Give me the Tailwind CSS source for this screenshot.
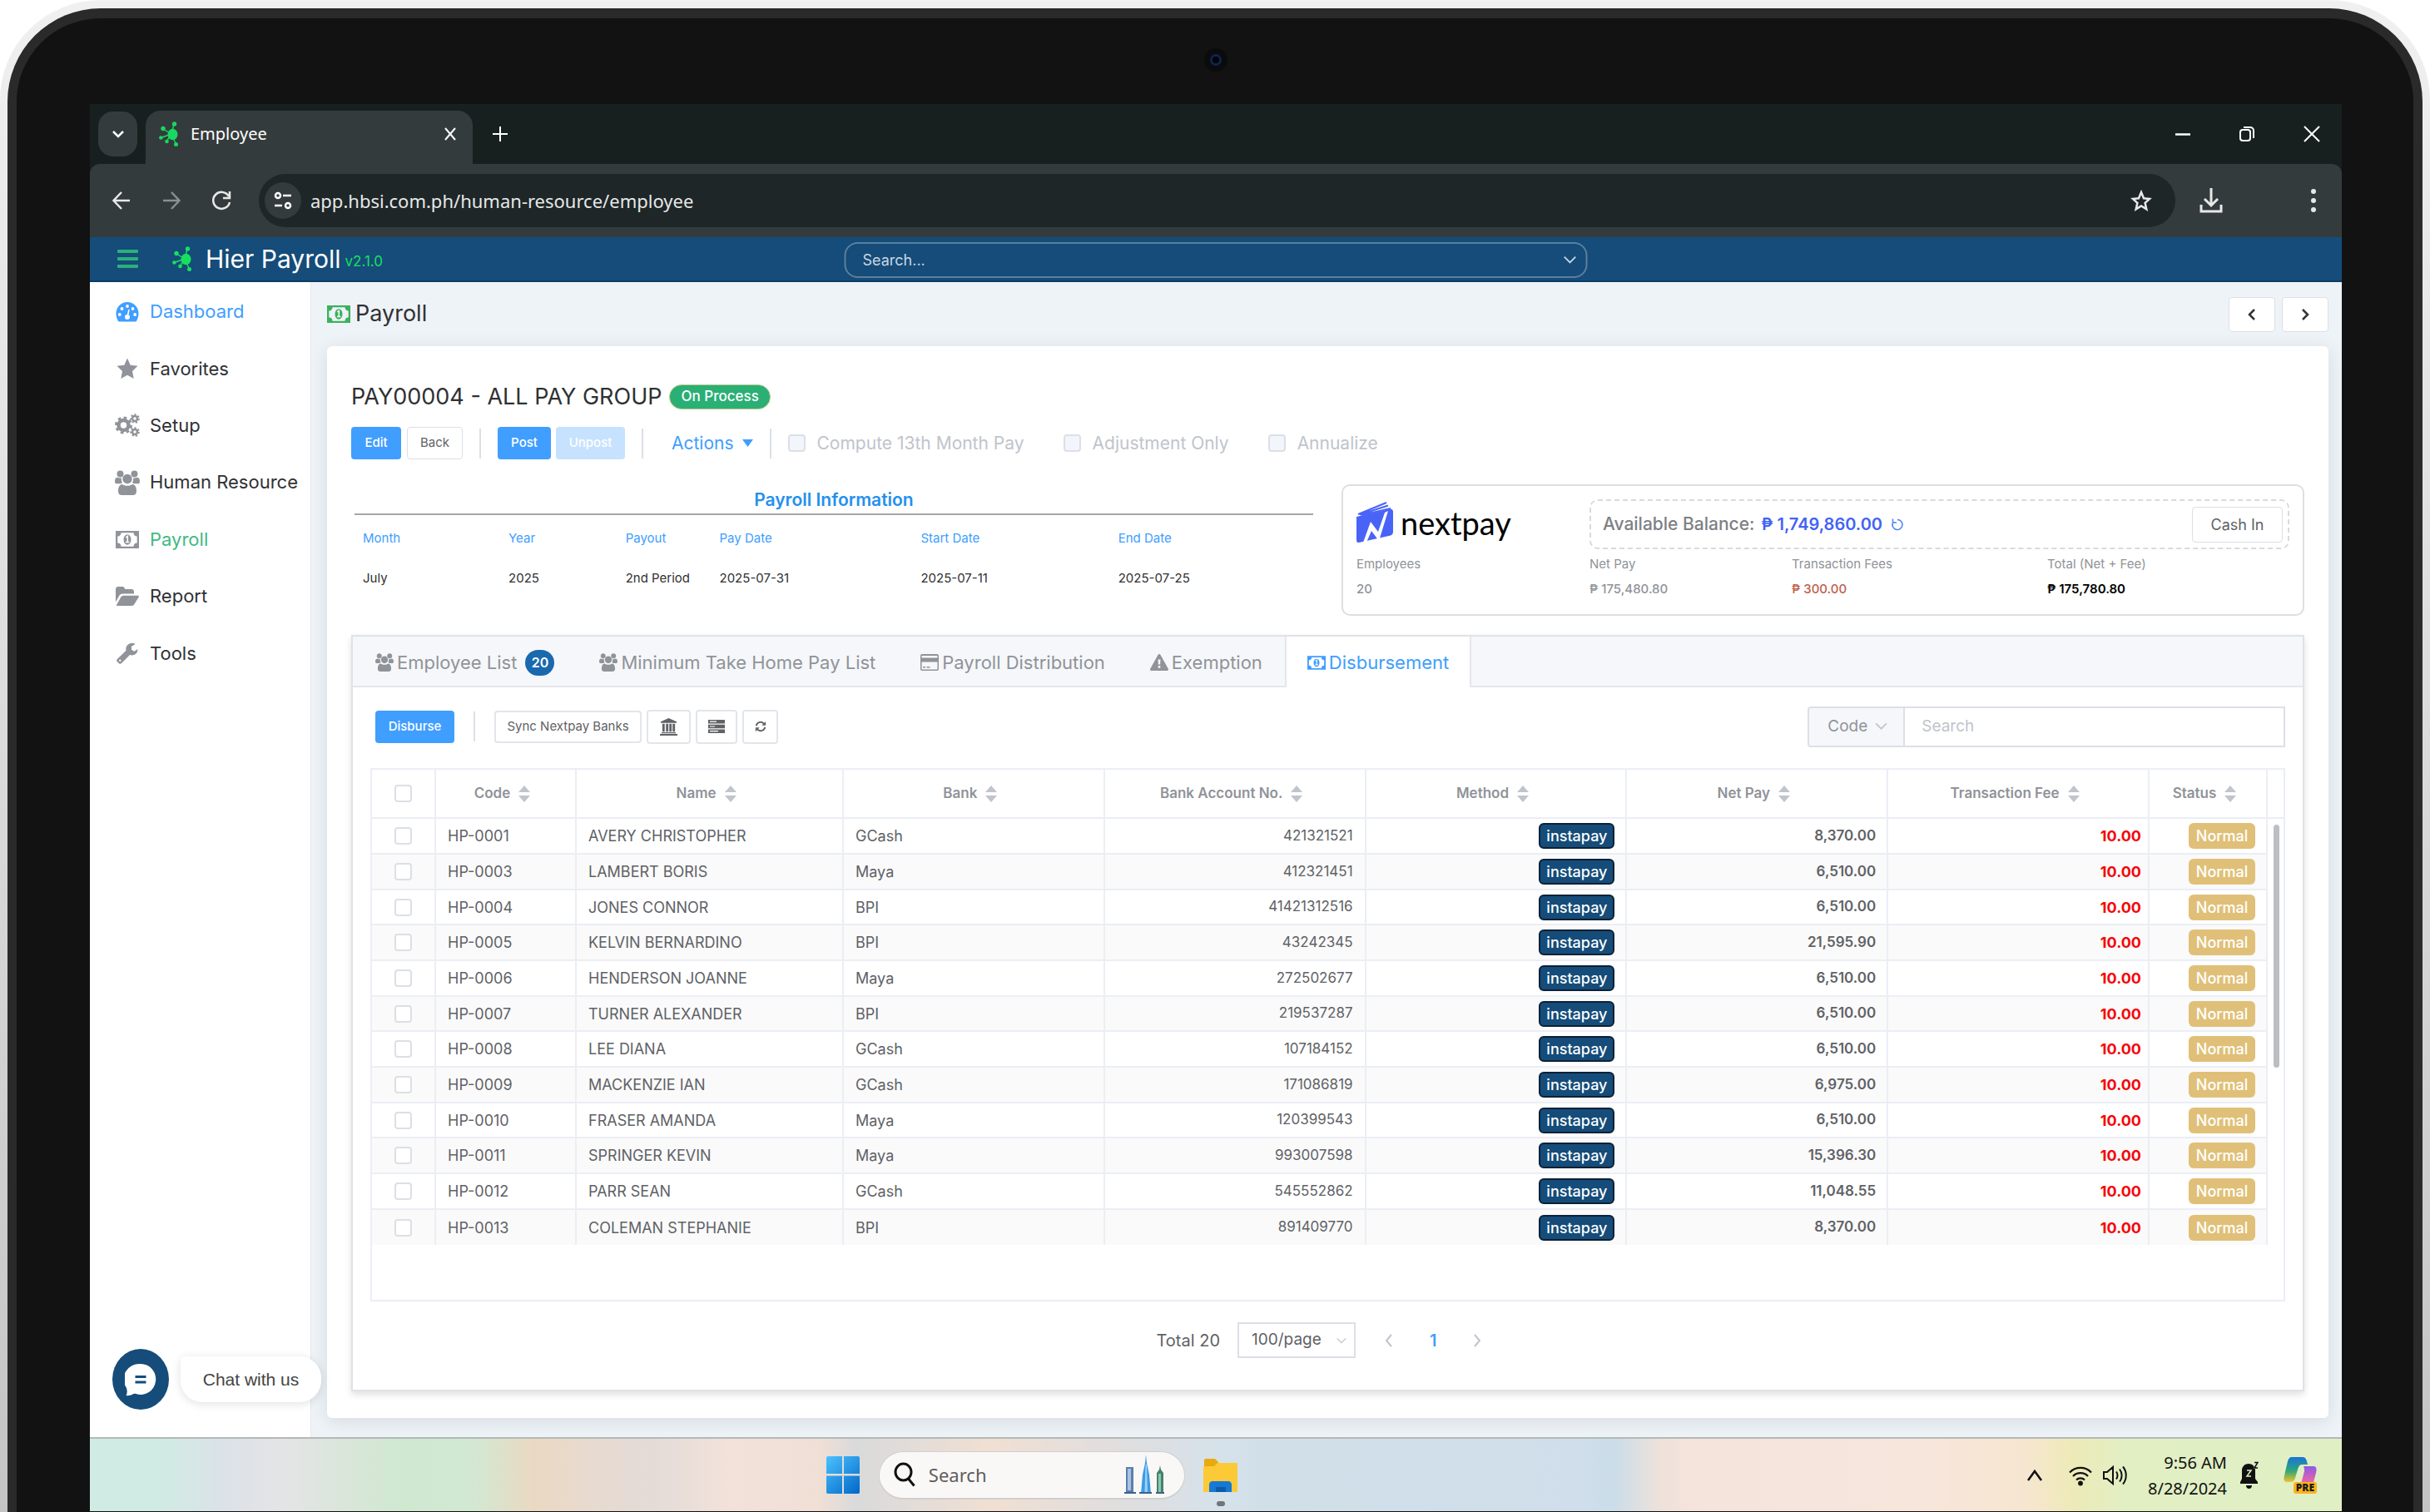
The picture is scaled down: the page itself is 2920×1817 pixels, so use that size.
<!DOCTYPE html>
<html lang="en">
<head>
    <meta charset="UTF-8">
    <meta name="viewport" content="width=device-width, initial-scale=1.0">
    <title>Employee - Hier Payroll</title>
    <script src="https://cdn.jsdelivr.net/npm/@tailwindcss/browser@4"></script>
</head>
<body class="min-h-screen bg-white font-['Inter','Liberation_Sans',sans-serif] text-[#606266]">
    <!-- Icon sprite -->
    <svg class="hidden" aria-hidden="true">
        <symbol id="i-virus" viewBox="0 0 24 30">
            <g stroke="currentColor" stroke-width="1.4"><path d="M15 15L18 3M15 15L5 9M15 15L2.500 19.500M15 15L9 24M15 15L20.500 27.500"/></g>
            <ellipse cx="16.500" cy="15.500" rx="6" ry="6.800" fill="currentColor"/>
            <g fill="currentColor"><circle cx="18.500" cy="3" r="2.700"/><circle cx="5" cy="8.500" r="2.700"/><circle cx="2.400" cy="19.500" r="2.300"/><circle cx="9.500" cy="24" r="2.300"/><circle cx="20.500" cy="27.500" r="2.500"/></g>
        </symbol>
        <symbol id="i-chevron" viewBox="0 0 16 16"><path d="M2 5l6 6 6-6" fill="none" stroke="currentColor" stroke-width="1.600"/></symbol>
        <symbol id="i-dash" viewBox="0 0 28 26">
            <path fill="currentColor" d="M14 1A13.500 13.500 0 0 0 .5 14.500c0 3.700 1 6.500 2.300 9 .4.700.8 1 1.600 1h19.200c.8 0 1.200-.3 1.600-1 1.300-2.500 2.300-5.300 2.300-9A13.500 13.500 0 0 0 14 1z"/>
            <g fill="#fff"><circle cx="4.800" cy="16" r="1.900"/><circle cx="7.500" cy="9" r="1.900"/><circle cx="14" cy="6" r="1.900"/><circle cx="20.500" cy="9" r="1.900"/><circle cx="23.200" cy="16" r="1.900"/><circle cx="14" cy="19" r="3"/></g>
            <path d="M14 19l2-9" stroke="#fff" stroke-width="1.600"/>
        </symbol>
        <symbol id="i-star" viewBox="0 0 26 26"><path fill="currentColor" d="M13 .5l3.700 8.300 8.800 1-6.500 6.200 1.700 9L13 20.700 5.300 25 7 16 .5 9.800l8.800-1z"/></symbol>
        <symbol id="i-cogs" viewBox="0 0 30 28">
            <g fill="none" stroke="currentColor">
                <circle cx="10.500" cy="14" r="6" stroke-width="4.500"/><circle cx="10.500" cy="14" r="9" stroke-width="3" stroke-dasharray="3.530 3.530"/>
                <circle cx="24" cy="6" r="3" stroke-width="2.500"/><circle cx="24" cy="6" r="4.800" stroke-width="2" stroke-dasharray="2.150 2.150"/>
                <circle cx="24" cy="22" r="3" stroke-width="2.500"/><circle cx="24" cy="22" r="4.800" stroke-width="2" stroke-dasharray="2.150 2.150"/>
            </g>
        </symbol>
        <symbol id="i-users" viewBox="0 0 30 30">
            <g fill="currentColor"><circle cx="6.500" cy="4.500" r="4"/><circle cx="23.500" cy="4.500" r="4"/><circle cx="15" cy="10.500" r="5.700"/>
            <path d="M3.500 8.800C1 8.800 0 10.500 0 13.500c0 2 1 2.800 2.500 2.800H7c.8-.7 1.500-1 2-1.200C7.800 13 7.500 11 8 9.200c-1.500.5-3 .4-4.500-.4zM26.500 8.800c2.500 0 3.500 1.700 3.500 4.700 0 2-1 2.800-2.500 2.800H23c-.8-.7-1.500-1-2-1.200 1.200-2.100 1.500-4.100 1-5.900 1.500.5 3 .4 4.500-.4z"/>
            <path d="M9 17c-3.500 0-5 4-5 8.500C4 28.500 5.800 30 8.500 30h13c2.700 0 4.500-1.500 4.500-4.500 0-4.500-1.500-8.500-5-8.500-1.600 1-3.500 1.800-6 1.800S10.600 18 9 17z"/></g>
        </symbol>
        <symbol id="i-money" viewBox="0 0 28 21">
            <path fill="currentColor" fill-rule="evenodd" d="M0 0h28v21H0zM6.500 2.300A4.300 4.300 0 0 1 2.300 6.500v8a4.300 4.300 0 0 1 4.200 4.200h15a4.300 4.300 0 0 1 4.200-4.200v-8a4.300 4.300 0 0 1-4.200-4.200z"/>
            <ellipse cx="14" cy="10.500" rx="4.500" ry="6.200" fill="currentColor"/><path d="M12.300 7.800L14.300 6.500V13M12 13.600h4.300" fill="none" stroke="#fff" stroke-width="1.500"/>
        </symbol>
        <symbol id="i-folder" viewBox="0 0 28 24"><path fill="currentColor" d="M0 18.500V3C0 1.300 1.300 0 3 0h5c1.700 0 3 1.300 3 3h8c1.700 0 3 1.300 3 3v2.500H8.500c-1.500 0-3 .8-4 2zM1 22l5.300-9.500c.6-1 1.700-1.800 3-1.800H27c1 0 1.300.8.700 1.700L22.500 21c-.7 1.200-1.800 2-3 2H1.500c-.6 0-.8-.4-.5-1z"/></symbol>
        <symbol id="i-wrench" viewBox="0 0 26 26"><path fill="currentColor" fill-rule="evenodd" d="M25.500 8.500c0 4-3.200 7-7 7-.9 0-1.700-.2-2.500-.5L6.300 24.800a2.700 2.700 0 0 1-3.900 0l-1.200-1.200a2.700 2.700 0 0 1 0-3.900L11.500 9.800A7.300 7.300 0 0 1 18.500.8c1.500 0 3 .4 4.200 1.100L18 4.800v4l3.200 2 4.200-2.600zM4.300 20.500a1.200 1.200 0 1 0 0 2.400 1.200 1.200 0 0 0 0-2.400z"/></symbol>
        <symbol id="i-card" viewBox="0 0 22 20"><path fill="currentColor" fill-rule="evenodd" d="M2 0h18a2 2 0 0 1 2 2v16a2 2 0 0 1-2 2H2a2 2 0 0 1-2-2V2a2 2 0 0 1 2-2zM1.500 2v2.500h19V2zM1.500 9.500V18l.5.500h18l.5-.5V9.500zM3 15h3v1.500H3zM7.500 15h4v1.500h-4z"/></symbol>
        <symbol id="i-warn" viewBox="0 0 22 20"><path fill="currentColor" fill-rule="evenodd" d="M11 0c.7 0 1.200.3 1.500.9l9.200 16.700c.7 1.200-.1 2.400-1.500 2.400H1.800C.4 20-.4 18.800.3 17.600L9.500.9C9.800.3 10.300 0 11 0zM9.500 6.500l.4 6h2.200l.4-6zM9.700 14v2.700h2.600V14z"/></symbol>
        <symbol id="i-bank" viewBox="0 0 22 22"><path fill="currentColor" d="M11 0l10 4.500V6H1V4.500zM3 7.200h3V17H3zM7.600 7.200h3V17h-3zM11.800 7.200h3V17h-3zM16 7.200h3V17h-3zM2 17.800h18v1.400H2zM0 20h22v2H0z"/></symbol>
        <symbol id="i-server" viewBox="0 0 20 16"><path fill="currentColor" d="M0 0h20v4.500H0zM0 5.700h20v4.500H0zM0 11.400h20V16H0z"/><path d="M2 2.200h8M2 8h6M2 13.700h10" stroke="#fff" stroke-width="1.200"/></symbol>
        <symbol id="i-refresh" viewBox="0 0 16 16"><path d="M2 7a6 6 0 0 1 10.800-2.500M14 9A6 6 0 0 1 3.200 11.500" fill="none" stroke="currentColor" stroke-width="2.200"/><path fill="currentColor" d="M15 1v5.500H9.500zM1 15V9.500h5.500z"/></symbol>
    </svg>

    <!-- Laptop bezel -->
    <div class="flex min-h-screen flex-col rounded-t-[120px] border-t border-[#f4f4f4] bg-linear-to-b from-[#f0f0f0] to-[#c4c4c4] px-[9px] pt-[9px]">
        <div class="flex flex-1 flex-col rounded-t-[112px] border-x-[11px] border-t-[12px] border-[#2a2a2a] bg-[#121212] pr-[86px] pb-px pl-[88px]">
            <div class="flex h-[103px] items-center justify-center pb-1">
                <div class="flex size-7 items-center justify-center rounded-full bg-[#0b0b0b]">
                    <div class="flex size-[14px] items-center justify-center rounded-full bg-[#0a2550]"><span class="size-2 rounded-full bg-black"></span></div>
                </div>
            </div>

            <div class="flex flex-1 flex-col bg-white">
                <!-- Browser tab strip -->
                <div class="flex h-[72px] items-center bg-[#18201f] pl-[10px] font-['Noto_Sans',sans-serif] text-white">
                    <button class="flex h-[54px] w-[47px] items-center justify-center rounded-[18px] bg-[#343b3c]" aria-label="Search tabs">
                        <svg class="size-4"><path d="M2 5l6 6 6-6" fill="none" stroke="#fff" stroke-width="2.500"/></svg>
                    </button>
                    <div class="ml-[10px] flex h-16 w-[393px] items-center self-end rounded-t-[18px] bg-[#343b3c] pr-[18px] pb-2 pl-4">
                        <svg class="h-[30px] w-6 text-[#17d860]"><use href="#i-virus"/></svg>
                        <span class="ml-[14px] flex-1 text-[20px]">Employee</span>
                        <button aria-label="Close tab"><svg class="size-[18px]" viewBox="0 0 18 18"><path d="M3 2l12 14M15 2L3 16" stroke="#fff" stroke-width="2"/></svg></button>
                    </div>
                    <button class="ml-6" aria-label="New tab"><svg class="size-[18px]"><path d="M9 0v18M0 9h18" stroke="#fff" stroke-width="2"/></svg></button>
                    <div class="ml-auto flex items-center gap-[58px] pr-[26px]">
                        <button aria-label="Minimize"><svg class="h-[3px] w-[18px]"><path d="M0 1.500h18" stroke="#fff" stroke-width="2.500"/></svg></button>
                        <button aria-label="Restore"><svg class="size-5" viewBox="0 0 20 20" fill="none" stroke="#fff" stroke-width="2"><rect x="2" y="5" width="12" height="13" rx="3"/><path d="M6 2h8a4 4 0 0 1 4 4v9"/></svg></button>
                        <button aria-label="Close"><svg class="size-5" viewBox="0 0 20 20"><path d="M1 1l18 18M19 1L1 19" stroke="#fff" stroke-width="2"/></svg></button>
                    </div>
                </div>
                <!-- Address bar -->
                <div class="bg-[#18201f]">
                    <div class="flex h-[88px] items-center rounded-t-[12px] bg-[#343b3c] pr-[31px] pl-[26px] font-['Noto_Sans',sans-serif]">
                        <button aria-label="Back"><svg class="size-6" viewBox="0 0 24 24" fill="none" stroke="#e8e8e8" stroke-width="2.500"><path d="M22 12H3M12 2L2.500 12l9.500 10"/></svg></button>
                        <button class="ml-9" aria-label="Forward"><svg class="size-6" viewBox="0 0 24 24" fill="none" stroke="#8a8f8f" stroke-width="2.500"><path d="M2 12h19M12 2l9.500 10-9.500 10"/></svg></button>
                        <button class="ml-9" aria-label="Reload"><svg class="size-6" viewBox="0 0 24 24" fill="none" stroke="#e8e8e8" stroke-width="2.500"><path d="M21 7A10 10 0 1 0 22 14M22 1v8h-8"/></svg></button>
                        <div class="ml-[33px] flex h-16 flex-1 items-center rounded-full bg-[#1e2627] pr-[28px] pl-[7px]">
                            <div class="flex size-[44px] items-center justify-center rounded-full bg-[#343b3c]">
                                <svg class="size-6" viewBox="0 0 24 24" fill="none" stroke="#fff" stroke-width="2.500"><circle cx="6" cy="6" r="3"/><path d="M12 6h10M2 18h9"/><circle cx="18" cy="18" r="3"/></svg>
                            </div>
                            <input class="ml-[11px] flex-1 text-[22px] text-[#e6e8e8]" aria-label="Address" value="app.hbsi.com.ph/human-resource/employee">
                            <button aria-label="Bookmark"><svg class="size-[26px]" viewBox="0 0 26 26"><path d="M13 3l3 7.300 7 .6-5.400 5 1.700 7.500-6.300-4-6.300 4 1.700-7.500-5.400-5 7-.6z" fill="none" stroke="#e8e8e8" stroke-width="2.500"/></svg></button>
                        </div>
                        <button class="ml-[29px]" aria-label="Downloads"><svg class="h-[30px] w-7" viewBox="0 0 28 30" fill="none" stroke="#e8e8e8" stroke-width="3"><path d="M14 0v20M6 13l8 8 8-8M2 20v8h24v-8"/></svg></button>
                        <button class="ml-[106px]" aria-label="Menu"><svg class="h-7 w-1.5" fill="#e8e8e8"><circle cx="3" cy="3" r="3"/><circle cx="3" cy="14" r="3"/><circle cx="3" cy="25" r="3"/></svg></button>
                    </div>
                </div>

                <!-- App header -->
                <header class="relative flex h-[54px] items-center border-b-2 border-[#0c3b66] bg-[#154c79] pl-[33px]">
                    <button aria-label="Toggle menu"><svg class="h-[22px] w-[25px]" fill="#2bb07b"><rect width="25" height="4" rx="1"/><rect y="9" width="25" height="4" rx="1"/><rect y="18" width="25" height="4" rx="1"/></svg></button>
                    <a href="#" class="ml-[41px] flex items-center">
                        <svg class="h-[30px] w-6 text-[#17e05f]"><use href="#i-virus"/></svg>
                        <span class="ml-4 text-[30px] text-white">Hier Payroll</span>
                        <span class="ml-[5px] pt-2 text-[17px] text-[#17e05f]">v2.1.0</span>
                    </a>
                    <div class="absolute top-[6px] left-1/2 h-[43px] w-[33%] -translate-x-1/2">
                        <input class="size-full rounded-2xl border-2 border-[#5b7f9e] px-5 text-[18px] placeholder:text-[#c9d6e2]" aria-label="Search" placeholder="Search...">
                        <svg class="absolute top-3 right-3 size-[18px] text-[#c9d6e2]"><use href="#i-chevron"/></svg>
                    </div>
                </header>

                <div class="flex flex-1">
                    <!-- Sidebar -->
                    <aside class="relative z-10 flex w-[266px] flex-col border-r border-[#e4e9ee] bg-white">
                        <nav class="flex flex-col pt-px text-[22px] text-[#303133]">
                            <a href="#" class="flex h-[69px] items-center gap-3 pl-[30px] text-[#409eff]"><svg class="h-[26px] w-[30px]"><use href="#i-dash"/></svg>Dashboard</a>
                            <a href="#" class="flex h-[68px] items-center gap-3 pl-[30px]"><svg class="h-[26px] w-[30px] text-[#909399]"><use href="#i-star"/></svg>Favorites</a>
                            <a href="#" class="flex h-[68px] items-center gap-3 pl-[30px]"><svg class="h-[28px] w-[30px] text-[#909399]"><use href="#i-cogs"/></svg>Setup</a>
                            <a href="#" class="flex h-[69px] items-center gap-3 pl-[30px]"><svg class="h-[30px] w-[30px] text-[#909399]"><use href="#i-users"/></svg>Human Resource</a>
                            <a href="#" class="flex h-[68px] items-center gap-3 pl-[30px] text-[#42b983]"><svg class="h-[21px] w-[30px] text-[#909399]"><use href="#i-money"/></svg>Payroll</a>
                            <a href="#" class="flex h-[69px] items-center gap-3 pl-[30px]"><svg class="h-[24px] w-[30px] text-[#909399]"><use href="#i-folder"/></svg>Report</a>
                            <a href="#" class="flex h-[68px] items-center gap-3 pl-[30px]"><svg class="h-[26px] w-[30px] text-[#909399]"><use href="#i-wrench"/></svg>Tools</a>
                        </nav>
                        <div class="mt-auto mb-[33px] ml-[27px] flex items-center gap-[14px]">
                            <button class="flex h-[73px] w-[68px] shrink-0 items-center justify-center rounded-[50%] bg-[#154c79]" aria-label="Open chat">
                                <svg class="h-10 w-[38px]" viewBox="0 0 38 40"><path fill="#fff" d="M19 1a18 18.500 0 1 1-5 36.200c-1.500-.5-3-.6-4.500.3C7 38.800 4 39.500 1.500 39c1.500-2.500 1.500-5.500.5-9A18.500 18.500 0 0 1 19 1z"/><path d="M12.500 16.500h13M12.500 23h13" stroke="#154c79" stroke-width="2.800"/></svg>
                            </button>
                            <div class="flex h-[55px] w-[169px] shrink-0 items-center justify-center rounded-[26px] rounded-tl-md bg-white font-['Liberation_Sans',sans-serif] text-[21px] text-[#444] shadow-[0_2px_12px_rgba(0,0,0,0.12)]">Chat with us</div>
                        </div>
                    </aside>

                    <!-- Page -->
                    <main class="flex flex-1 flex-col bg-[#eef3f8] pr-[16px] pb-[23px] pl-[19px]">
                        <div class="flex h-[77px] items-center">
                            <svg class="h-[21px] w-7 text-[#3cb15c]"><use href="#i-money"/></svg>
                            <h1 class="ml-[6px] flex-1 text-[27px] text-[#303133]">Payroll</h1>
                            <div class="flex gap-2">
                                <button class="flex h-[42px] w-[56px] items-center justify-center rounded border border-[#dcdfe6] bg-white" aria-label="Previous"><svg class="size-4" fill="none" stroke="#333" stroke-width="2.500"><path d="M11 2L5 8l6 6"/></svg></button>
                                <button class="flex h-[42px] w-[56px] items-center justify-center rounded border border-[#dcdfe6] bg-white" aria-label="Next"><svg class="size-4" fill="none" stroke="#333" stroke-width="2.500"><path d="M5 2l6 6-6 6"/></svg></button>
                            </div>
                        </div>

                        <section class="flex flex-1 flex-col rounded-md bg-white px-[29px] pt-[42px] pb-8 shadow-[0_4px_22px_rgba(0,0,0,0.10)]">
                            <div class="flex h-[38px] items-center gap-[9px]">
                                <h2 class="text-[27px] text-[#303133]">PAY00004 - ALL PAY GROUP</h2>
                                <span class="flex h-[30px] items-center rounded-full border border-[#b9c98a] bg-[#2aaf75] px-[13px] text-[17px] font-medium text-white">On Process</span>
                            </div>

                            <div class="mt-[17px] flex h-[39px] items-center text-[21px] text-[#c0c4cc]">
                                <button class="h-full w-[60px] rounded bg-[#409eff] text-[15px] font-medium text-white">Edit</button>
                                <button class="ml-[7px] h-full w-[67px] rounded border border-[#dcdfe6] text-[15px] text-[#606266]">Back</button>
                                <span class="ml-5 h-9 w-0.5 bg-[#dcdfe6]"></span>
                                <button class="ml-5 h-full w-[64px] rounded bg-[#409eff] text-[15px] font-medium text-white">Post</button>
                                <button class="ml-[6px] h-full w-[83px] rounded bg-[#c6e2ff] text-[15px] font-medium text-white" disabled>Unpost</button>
                                <span class="ml-5 h-9 w-0.5 bg-[#dcdfe6]"></span>
                                <button class="ml-[34px] flex items-center gap-[10px] text-[#409eff]">Actions<svg class="h-[9px] w-[13px]" fill="#409eff"><path d="M0 0h13L6.500 9z"/></svg></button>
                                <span class="ml-5 h-9 w-0.5 bg-[#dcdfe6]"></span>
                                <label class="ml-5 flex items-center gap-[14px]"><input type="checkbox" disabled class="size-[21px] appearance-none rounded-sm border-2 border-[#dcdfe6] bg-[#f2f6fc]">Compute 13th Month Pay</label>
                                <label class="ml-[47px] flex items-center gap-[14px]"><input type="checkbox" disabled class="size-[21px] appearance-none rounded-sm border-2 border-[#dcdfe6] bg-[#f2f6fc]">Adjustment Only</label>
                                <label class="ml-[47px] flex items-center gap-[14px]"><input type="checkbox" disabled class="size-[21px] appearance-none rounded-sm border-2 border-[#dcdfe6] bg-[#f2f6fc]">Annualize</label>
                            </div>

                            <div class="mt-[30px] flex gap-[34px]">
                                <div class="flex-1 pl-1">
                                    <table class="w-full table-fixed text-left text-[15px] text-[#303133]">
                                        <caption class="h-[37px] border-b-2 border-[#a6a6a6] pt-[3px] text-[21px] font-semibold text-[#2490ee]">Payroll Information</caption>
                                        <colgroup><col class="w-[15.2%]"><col class="w-[12.2%]"><col class="w-[9.8%]"><col class="w-[21%]"><col class="w-[20.6%]"><col></colgroup>
                                        <thead><tr class="h-[57px] text-[#409eff]">
                                            <th class="pl-[10px] font-normal">Month</th><th class="pl-[10px] font-normal">Year</th><th class="pl-[10px] font-normal">Payout</th><th class="pl-[10px] font-normal">Pay Date</th><th class="pl-[10px] font-normal">Start Date</th><th class="pl-[10px] font-normal">End Date</th>
                                        </tr></thead>
                                        <tbody><tr class="h-[38px] whitespace-nowrap">
                                            <td class="pl-[10px]">July</td><td class="pl-[10px]">2025</td><td class="pl-[10px]">2nd Period</td><td class="pl-[10px]">2025-07-31</td><td class="pl-[10px]">2025-07-11</td><td class="pl-[10px]">2025-07-25</td>
                                        </tr></tbody>
                                    </table>
                                </div>
                                <div class="grid h-[158px] w-[49.3%] grid-cols-[1fr_841px] rounded-[10px] border-2 border-[#dcdfe2] pt-[16px] pr-4 pl-4">
                                    <div>
                                        <div class="flex h-[60px] items-center gap-[9px] pb-1">
                                            <svg class="h-[50px] w-11 shrink-0" viewBox="0 0 44 50">
                                                <path fill="#4a63f7" d="M0 18L39 9c3-1 5 0 5 3v24c0 2-1 4-3 4.500L3 49c-2 .5-3-1-3-3z"/>
                                                <path stroke="#4a63f7" stroke-width="2" fill="none" d="M2 15L36 1M4 15.500L38 4.500M6 16L41 8"/>
                                                <path fill="#fff" d="M8 49l9-25 9 12 8-23 4-2-11 36-9-12-7 16z"/>
                                            </svg>
                                            <span class="font-['Lato',sans-serif] text-[38px] leading-none text-black">nextpay</span>
                                        </div>
                                        <div class="pt-[3px] text-[15px] leading-[30px] text-[#909399]"><p>Employees</p><p class="font-medium">20</p></div>
                                    </div>
                                    <div>
                                        <div class="flex h-[60px] items-center rounded-[10px] border-2 border-dashed border-[#d8dadd] pr-[6px] pl-[14px] text-[21px] font-medium text-[#7d8086]">
                                            Available Balance:<span class="ml-2 text-[20px] font-semibold text-[#4263f5]">₱ 1,749,860.00</span>
                                            <button class="ml-[10px]" aria-label="Refresh balance"><svg class="size-4" viewBox="0 0 16 16" fill="none" stroke="#4a84f5" stroke-width="1.500"><path d="M8 2.500A6 6 0 1 1 2.500 6M2.500 1.500V6H7"/></svg></button>
                                            <button class="ml-auto h-[43px] w-[109px] rounded border border-[#dcdfe6] bg-white text-[18px] font-normal text-[#606266]">Cash In</button>
                                        </div>
                                        <div class="grid grid-cols-[243px_307px_1fr] pt-[3px] text-[15px] leading-[30px] text-[#909399]">
                                            <p>Net Pay</p><p>Transaction Fees</p><p>Total (Net + Fee)</p>
                                            <p class="font-medium">₱ 175,480.80</p><p class="font-medium text-[#c0604f]">₱ 300.00</p><p class="font-semibold text-black">₱ 175,780.80</p>
                                        </div>
                                    </div>
                                </div>
                            </div>

                            <!-- Tabs card -->
                            <div class="mt-[23px] flex flex-1 flex-col border-2 border-[#dfe2e6] shadow-[0_4px_8px_rgba(0,0,0,0.12)]">
                                <div class="flex h-[61px] border-b-2 border-[#e4e7ed] bg-[#f5f7fa] text-[22px] text-[#909399]" role="tablist">
                                    <button role="tab" class="flex items-center gap-1 px-[27px] pt-[3px]"><svg class="h-[22px] w-[22px]"><use href="#i-users"/></svg>Employee List<span class="ml-[6px] flex h-[31px] w-[35px] items-center justify-center rounded-full bg-[#1a69ae] text-[16px] font-semibold text-white">20</span></button>
                                    <button role="tab" class="flex items-center gap-1 px-[27px] pt-[3px]"><svg class="h-[22px] w-[22px]"><use href="#i-users"/></svg>Minimum Take Home Pay List</button>
                                    <button role="tab" class="flex items-center gap-1 px-[27px] pt-[3px]"><svg class="h-[20px] w-[22px]"><use href="#i-card"/></svg>Payroll Distribution</button>
                                    <button role="tab" class="flex items-center gap-1 px-[27px] pt-[3px]"><svg class="h-[20px] w-[22px]"><use href="#i-warn"/></svg>Exemption</button>
                                    <button role="tab" aria-selected="true" class="-mb-0.5 flex items-center gap-1 border-x-2 border-[#e4e7ed] bg-white px-[25px] pt-[1px] text-[#409eff]"><svg class="h-[17px] w-[22px]"><use href="#i-money"/></svg>Disbursement</button>
                                </div>

                                <div class="flex flex-1 flex-col px-[21px] pt-[22px]">
                                    <div class="flex h-[50px] items-center pl-[6px] text-[#606266]">
                                        <button class="h-[39px] w-[95px] rounded bg-[#409eff] text-[15px] font-medium text-white">Disburse</button>
                                        <span class="mx-[23px] h-9 w-0.5 bg-[#dcdfe6]"></span>
                                        <button class="h-[39px] w-[177px] rounded border-2 border-[#e2e5ea] text-[15px]">Sync Nextpay Banks</button>
                                        <button class="ml-[6px] flex h-[41px] w-[53px] items-center justify-center rounded border-2 border-[#e2e5ea]" aria-label="Banks"><svg class="size-[21px]"><use href="#i-bank"/></svg></button>
                                        <button class="ml-[6px] flex h-[41px] w-[50px] items-center justify-center rounded border-2 border-[#e2e5ea]" aria-label="Logs"><svg class="h-4 w-5"><use href="#i-server"/></svg></button>
                                        <button class="ml-[6px] flex h-[41px] w-[43px] items-center justify-center rounded border-2 border-[#e2e5ea]" aria-label="Refresh"><svg class="size-[14px]"><use href="#i-refresh"/></svg></button>
                                        <div class="ml-auto flex h-[49px] w-[25%] text-[19px]">
                                            <div class="relative w-[115px]">
                                                <select class="size-full appearance-none rounded-l border-2 border-r-0 border-[#dcdfe6] bg-[#f5f7fa] pl-[22px] text-[#909399]" aria-label="Search field"><option>Code</option></select>
                                                <svg class="absolute top-[15px] right-[18px] size-[17px] text-[#c0c4cc]"><use href="#i-chevron"/></svg>
                                            </div>
                                            <input class="min-w-0 flex-1 border-2 border-[#dcdfe6] px-5 placeholder:text-[#c0c4cc]" aria-label="Search employees" placeholder="Search">
                                        </div>
                                    </div>

                                    <div class="relative mt-[25px] border-2 border-[#ebeef5] pb-[66px]">
                                        <table class="w-full table-fixed border-separate border-spacing-0 text-[18px]">
                                            <colgroup><col class="w-[77px]"><col class="w-[169px]"><col class="w-[321px]"><col><col><col><col><col><col class="w-[142px]"><col class="w-[19px]"></colgroup>
                                            <thead><tr id="head" class="text-[17px] text-[#909399]"></tr></thead>
                                            <tbody id="rows"></tbody>
                                        </table>
                                        <div class="absolute top-[66px] right-[5px] h-[292px] w-[7px] rounded-full bg-[#bcbec2]"></div>
                                    </div>

                                    <div class="mt-[25px] flex items-center justify-center pr-[20px] text-[20px]">
                                        <span>Total 20</span>
                                        <div class="relative ml-[21px] h-[43px] w-[142px]">
                                            <select class="size-full appearance-none border-2 border-[#dcdfe6] pl-[15px] text-[19px]" aria-label="Page size"><option>100/page</option></select>
                                            <svg class="absolute top-[15px] right-[10px] size-[14px] text-[#c0c4cc]"><use href="#i-chevron"/></svg>
                                        </div>
                                        <button class="ml-[34px]" aria-label="Previous page"><svg class="h-4 w-3" fill="none" stroke="#c0c4cc" stroke-width="2"><path d="M9 1L3 8l6 7"/></svg></button>
                                        <button class="mx-[43px] font-semibold text-[#409eff]">1</button>
                                        <button aria-label="Next page"><svg class="h-4 w-3" fill="none" stroke="#c0c4cc" stroke-width="2"><path d="M3 1l6 7-6 7"/></svg></button>
                                    </div>
                                </div>
                            </div>
                        </section>
                    </main>
                </div>

                <!-- Windows taskbar -->
                <footer class="relative flex h-[89px] items-center border-t-2 border-[#b4b8b8] bg-[linear-gradient(90deg,#d0ebe3_0%,#d0ebe3_3%,#dbe2e8_6%,#e4e4e6_8.5%,#d9e6d9_11.5%,#cfe8d0_14%,#d2e8d2_17%,#ead9c2_19.7%,#e8dace_22%,#e4dbd8_25%,#f3e2da_28.5%,#efdfd5_32.5%,#d9dadb_34%,#f1dfd2_40%,#dfdedf_46%,#d5e2eb_50.500%,#d1dfe8_52%,#cfdeea_66%,#cbdde9_67.700%,#efe2da_69.800%,#f5e4dc_71.500%,#f7e6dc_81%,#f6e6d0_86%,#eeeab8_88%,#e1efc3_90.500%,#e1efc5_100%)] pl-[32.7%] font-['Noto_Sans',sans-serif]">
                    <button aria-label="Start"><svg class="h-[45px] w-10" viewBox="0 0 40 45">
                        <defs><linearGradient id="g-win" gradientUnits="userSpaceOnUse" x1="0" y1="0" x2="40" y2="45"><stop offset="0" stop-color="#4cc2ff"/><stop offset="1" stop-color="#0067c8"/></linearGradient></defs>
                        <path fill="url(#g-win)" d="M2 0h17v21H0V2a2 2 0 0 1 2-2zM21 0h17a2 2 0 0 1 2 2v19H21zM0 23.500h19V45H2a2 2 0 0 1-2-2zM21 23.500h19V43a2 2 0 0 1-2 2H21z"/>
                    </svg></button>
                    <label class="ml-[23px] flex h-[58px] w-[368px] items-center rounded-full border border-b-2 border-[#d0cfcf] bg-[#faf8f7] pr-6 pl-[17px]">
                        <svg class="h-[30px] w-[26px]" viewBox="0 0 26 30" fill="none" stroke="#111" stroke-width="3"><ellipse cx="11.500" cy="12" rx="9.500" ry="10"/><path d="M17.500 20l7 8.500"/></svg>
                        <input class="ml-[16px] min-w-0 flex-1 text-[22px] placeholder:text-[#5d5d5d]" placeholder="Search">
                        <svg class="h-[48px] w-12" viewBox="0 0 48 48">
                            <path fill="#5b7fae" d="M2 15h9v32H2z"/><path fill="#a9c3df" d="M4 17h4v26H4z"/>
                            <path fill="#3d9be6" d="M26 0l1 10 3 14 2 23H20l2-23 3-14z"/><path fill="#9ad1f7" d="M25.500 12h1.500l1 33h-3.500z"/>
                            <path fill="#47806f" d="M43 13l1 5 3 4v25h-8V22l3-4z"/><path fill="#8cc9a9" d="M41 23h3v23h-3z"/>
                            <path fill="#3b618f" d="M0 45h14v2H0zM18 45h15v2H18zM38 45h10v2H38z"/>
                        </svg>
                    </label>
                    <button class="relative ml-[22px]" aria-label="File Explorer">
                        <svg class="h-10 w-[41px]" viewBox="0 0 41 40"><path fill="#e9a90f" d="M1 2a2 2 0 0 1 2-2h11l4 4v6H1z"/><path fill="#fcca37" d="M0 9h13l4-4h24v35H0z"/><path fill="#1679d4" d="M7 40V31c0-2 1.500-4 4-4h19c2.500 0 4 2 4 4v9z"/><path fill="#0a5cab" d="M15 34h12v6H15z"/></svg>
                        <span class="absolute -bottom-[17px] left-4 h-1.5 w-2.5 rounded-full bg-[#70757a]"></span>
                    </button>
                    <div class="ml-auto flex items-center pr-[30px] text-[#111]">
                        <button aria-label="Show hidden icons"><svg class="h-4 w-5" fill="none" stroke="#111" stroke-width="2.500"><path d="M2 14l8-11 8 11"/></svg></button>
                        <svg class="ml-[31px] h-[26px] w-7" viewBox="0 0 28 26" fill="none" stroke="#111" stroke-width="2.200"><path d="M1 9.500a18 18 0 0 1 26 0M5 14a12.500 12.500 0 0 1 18 0M9 18.500a7 7 0 0 1 10 0"/><circle cx="14" cy="22.500" r="1.800" fill="#111"/></svg>
                        <svg class="ml-3 h-[28px] w-[30px]" viewBox="0 0 30 28" fill="none" stroke="#111" stroke-width="2"><path d="M2 10h4l7-6v20l-7-6H2zM17 9.500c2 2.500 2 6.500 0 9M21 6.500c3.500 4.500 3.500 10.500 0 15M25 3.500c5 6 5 15 0 21"/></svg>
                        <div class="ml-[25px] text-right text-[20px] leading-[31px]">9:56 AM<br>8/28/2024</div>
                        <svg class="ml-4 h-[34px] w-[22px]" viewBox="0 0 22 34"><path fill="#111" d="M10 3c4.500 0 8 3.500 8 8v10l3 4v2H0v-2l2-4V11c0-4.500 3.500-8 8-8zM7 29h7c0 2.500-1.500 4-3.500 4S7 31.500 7 29z"/><path d="M8 11h5l-5 7h5M17 1.500h4L17 8h4" fill="none" stroke="#e1efc5" stroke-width="1.500"/><path d="M17 1.500h4L17 8h4" fill="none" stroke="#111" stroke-width="1.500"/></svg>
                        <div class="relative ml-[30px]">
                            <svg class="h-11 w-10" viewBox="0 0 40 44">
                                <defs><linearGradient id="g-l" x1="0" y1="0" x2="0" y2="1"><stop offset="0" stop-color="#1873d6"/><stop offset=".55" stop-color="#2fa67a"/><stop offset="1" stop-color="#f1c22b"/></linearGradient><linearGradient id="g-r" x1="0" y1="0" x2="0" y2="1"><stop offset="0" stop-color="#8b5be8"/><stop offset=".6" stop-color="#e564a8"/><stop offset="1" stop-color="#f5a04c"/></linearGradient></defs>
                                <path fill="url(#g-l)" d="M10 0h13c4 0 5 4 6 9h-7c-3 0-4 3-5 6l-3 10c-1 4-3 5-6 5H4c-4 0-4-4-3-8L5 5c1-3 2-5 5-5z"/>
                                <path fill="url(#g-r)" d="M24 11h12c4 0 4 4 3 8l-4 15c-1 4-3 6-6 6H16c4 0 4-4 5-8l4-15c0-2 0-4-1-6z"/>
                            </svg>
                            <span class="absolute right-0 bottom-0 rounded-[3px] bg-[#f9b51b] px-[3px] text-[12px] leading-[14px] font-black text-[#1b1b1b]">PRE</span>
                        </div>
                    </div>
                </footer>
            </div>
        </div>
    </div>

    <script>
        const columns = ['Code', 'Name', 'Bank', 'Bank Account No.', 'Method', 'Net Pay', 'Transaction Fee', 'Status'];
        const employees = [
            ['HP-0001', 'AVERY CHRISTOPHER', 'GCash', '421321521', '8,370.00'],
            ['HP-0003', 'LAMBERT BORIS', 'Maya', '412321451', '6,510.00'],
            ['HP-0004', 'JONES CONNOR', 'BPI', '41421312516', '6,510.00'],
            ['HP-0005', 'KELVIN BERNARDINO', 'BPI', '43242345', '21,595.90'],
            ['HP-0006', 'HENDERSON JOANNE', 'Maya', '272502677', '6,510.00'],
            ['HP-0007', 'TURNER ALEXANDER', 'BPI', '219537287', '6,510.00'],
            ['HP-0008', 'LEE DIANA', 'GCash', '107184152', '6,510.00'],
            ['HP-0009', 'MACKENZIE IAN', 'GCash', '171086819', '6,975.00'],
            ['HP-0010', 'FRASER AMANDA', 'Maya', '120399543', '6,510.00'],
            ['HP-0011', 'SPRINGER KEVIN', 'Maya', '993007598', '15,396.30'],
            ['HP-0012', 'PARR SEAN', 'GCash', '545552862', '11,048.55'],
            ['HP-0013', 'COLEMAN STEPHANIE', 'BPI', '891409770', '8,370.00'],
        ];

        const checkbox = label => `<input type="checkbox" aria-label="${label}" class="block mx-auto size-[21px] appearance-none rounded-sm border-2 border-[#dcdfe6] bg-white">`;

        // Table header
        document.getElementById('head').innerHTML =
            `<th class="h-[59px] border-r-2 border-b-2 border-[#ebeef5]">${checkbox('Select all')}</th>` +
            columns.map(name => `
                <th class="border-r-2 border-b-2 border-[#ebeef5] pr-2 font-semibold">
                    <div class="flex items-center justify-center gap-[10px]">${name}
                        <svg class="h-5 w-[14px]" fill="#c0c4cc"><path d="M7 0l7 8H0zM0 12h14l-7 8z"/></svg>
                    </div>
                </th>`).join('') +
            '<th class="border-b-2 border-[#ebeef5]"></th>';

        // Table body
        document.getElementById('rows').innerHTML = employees.map(([code, name, bank, account, net]) => `
            <tr class="group h-[43px] nth-[3n]:h-[42px] even:bg-[#fafafa] *:border-r-2 *:border-b-2 *:border-[#ebeef5] last:*:border-b-0">
                <td>${checkbox('Select ' + name)}</td>
                <td class="px-[14px]">${code}</td>
                <td class="px-[14px]">${name}</td>
                <td class="px-[14px]">${bank}</td>
                <td class="px-[14px] text-right text-[17px]">${account}</td>
                <td class="px-[13px]"><span class="ml-auto flex h-[31px] w-[91px] items-center justify-center rounded-md border-2 border-[#0b2138] bg-[#154c79] text-[18px] font-medium text-white">instapay</span></td>
                <td class="px-[13px] text-right text-[17px] font-semibold">${net}</td>
                <td class="px-[8px] text-right text-[18px] font-bold text-[#f5060b]">10.00</td>
                <td class="px-[13px]"><span class="ml-auto flex h-[31px] w-[80px] items-center justify-center rounded-md bg-[#e0c078] text-[18px] font-medium text-white">Normal</span></td>
                <td class="border-0! bg-white"></td>
            </tr>`).join('');
    </script>
</body>
</html>
